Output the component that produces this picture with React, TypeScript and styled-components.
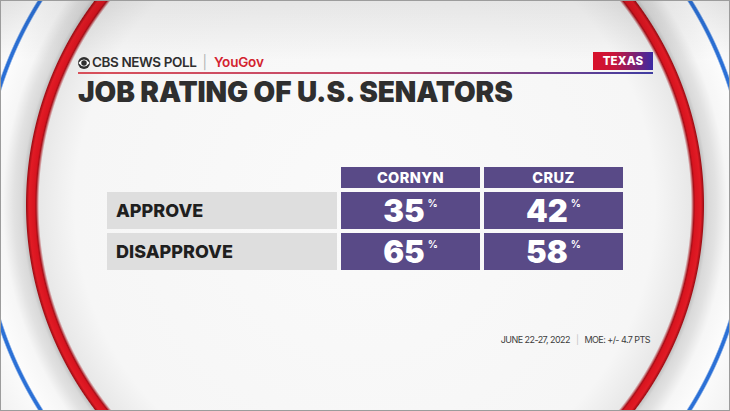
import React from 'react';
import styled, { createGlobalStyle } from 'styled-components';

const GlobalStyle = createGlobalStyle`
  html, body {
    margin: 0;
    padding: 0;
    background: #ffffff;
  }
  * {
    box-sizing: border-box;
  }
`;

const Stage = styled.div`
  width: 730px;
  height: 411px;
  overflow: hidden;
  border: 1px solid #9c9c9c;
  padding: 51px 0 0 77px;
  font-family: Inter, Lato, sans-serif;
  background:
    linear-gradient(to bottom, rgba(0, 0, 0, 0.07), rgba(0, 0, 0, 0) 60px),
    radial-gradient(
      circle at 364px 204px,
      #fafafa 0px,
      #f6f6f6 290px,
      #e8e8e8 326px,
      #a80f18 329px,
      #d8141f 330.5px,
      #e11b25 336px,
      #a00f16 338.5px,
      #c4c4c4 339.5px,
      #d9d9d9 343px,
      #e2e2e2 351px,
      #f6f6f6 362px,
      #fcfcfc 381px,
      #2b70d6 382.5px,
      #2b70d6 385px,
      #fafafa 386.5px,
      #efefef 430px
    );
`;

const Head = styled.div`
  width: 575px;
`;

const TopRow = styled.div`
  display: flex;
  align-items: flex-end;
  justify-content: space-between;
`;

const Brand = styled.div`
  display: flex;
  align-items: center;
  gap: 1px;
  margin-bottom: 1px;
  font-size: 13.5px;
  line-height: 13px;
`;

const BrandName = styled.span`
  font-weight: 600;
  color: #2f2f2f;
  letter-spacing: -0.4px;
`;

const Pipe = styled.span`
  color: #b5b5b5;
  font-weight: 400;
  margin: 0 6px 0 5px;
`;

const Partner = styled.span`
  color: #d3232f;
  font-weight: 600;
  letter-spacing: -0.2px;
`;

const StateBadge = styled.div`
  width: 60px;
  height: 18px;
  display: flex;
  align-items: center;
  justify-content: center;
  color: #ffffff;
  font-weight: 800;
  font-size: 11.5px;
  letter-spacing: 0.2px;
  background: linear-gradient(to right, #d8112a 0%, #c8153a 35%, #3b2aa4 100%);
`;

const Rule = styled.div`
  height: 2px;
  margin-top: 2px;
  background: linear-gradient(to right, #d8505a 0%, #c44a6a 50%, #3f3ca2 100%);
`;

const Title = styled.h1`
  margin: 3px 0 0 0;
  font-size: 28px;
  line-height: 30px;
  font-weight: 900;
  color: #2f2f2f;
  letter-spacing: -0.1px;
`;

const Table = styled.div`
  display: grid;
  grid-template-columns: 230px 139px 139px;
  grid-template-rows: 21px 37px 37px;
  gap: 4px;
  margin: 60px 0 0 29px;
`;

const Blank = styled.div``;

const ColHead = styled.div`
  display: flex;
  align-items: center;
  justify-content: center;
  background: #594a87;
  color: #ffffff;
  font-weight: 800;
  font-size: 14.5px;
  letter-spacing: 0.4px;
`;

const RowLabel = styled.div`
  display: flex;
  align-items: center;
  padding-left: 9px;
  background: #dedede;
  color: #1f1f1f;
  font-weight: 800;
  font-size: 18px;
`;

const Value = styled.div`
  display: flex;
  align-items: center;
  justify-content: center;
  background: #594a87;
  color: #ffffff;
`;

const Num = styled.span`
  font-weight: 900;
  font-size: 31px;
  line-height: 32px;
`;

const Pct = styled.sup`
  font-size: 10px;
  font-weight: 700;
  align-self: flex-start;
  margin: 6px 0 0 3px;
  line-height: 10px;
`;

const Footer = styled.div`
  width: 575px;
  margin-top: 64px;
  padding-right: 3px;
  text-align: right;
  font-size: 9px;
  color: #3c3c3c;
  letter-spacing: -0.55px;
`;

const Sep = styled.span`
  color: #c4c4c4;
  margin: 0 6px;
`;

const CbsEye = () => (
  <svg width="12" height="12" viewBox="0 0 20 20" style={{ marginRight: 1 }}>
    <circle cx="10" cy="10" r="10" fill="#2f2f2f" />
    <path d="M0.6 10 Q10 -1.5 19.4 10 Q10 21.5 0.6 10Z" fill="#ffffff" />
    <circle cx="10" cy="10" r="4.6" fill="#2f2f2f" />
  </svg>
);

const rows = [
  { label: 'APPROVE', values: [35, 42] },
  { label: 'DISAPPROVE', values: [65, 58] },
];

const App: React.FC = () => {
  return (
    <Stage>
      <GlobalStyle />
      <Head>
        <TopRow>
          <Brand>
            <CbsEye />
            <BrandName>CBS NEWS POLL</BrandName>
            <Pipe>|</Pipe>
            <Partner>YouGov</Partner>
          </Brand>
          <StateBadge>TEXAS</StateBadge>
        </TopRow>
        <Rule />
        <Title>JOB RATING OF U.S. SENATORS</Title>
      </Head>
      <Table>
        <Blank />
        <ColHead>CORNYN</ColHead>
        <ColHead>CRUZ</ColHead>
        {rows.map((r) => (
          <React.Fragment key={r.label}>
            <RowLabel>{r.label}</RowLabel>
            {r.values.map((v, i) => (
              <Value key={i}>
                <Num>{v}</Num>
                <Pct>%</Pct>
              </Value>
            ))}
          </React.Fragment>
        ))}
      </Table>
      <Footer>
        JUNE 22-27, 2022<Sep>|</Sep>MOE: +/- 4.7 PTS
      </Footer>
    </Stage>
  );
};

export default App;
